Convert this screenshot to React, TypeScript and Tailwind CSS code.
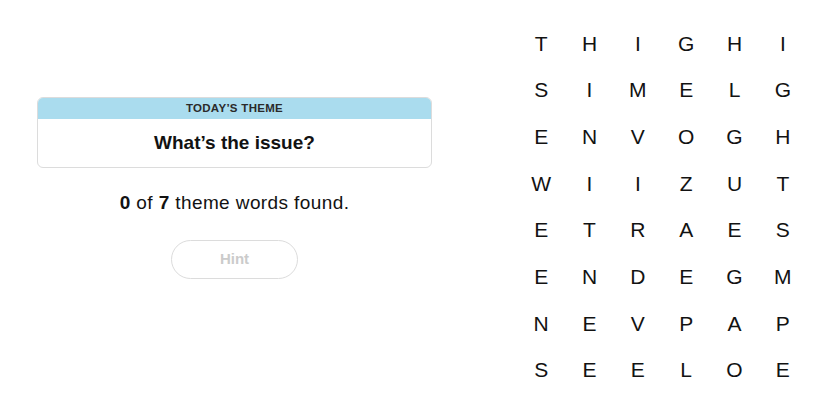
const grid = [
  "THIGHI",
  "SIMELG",
  "ENVOGH",
  "WIIZUT",
  "ETRAES",
  "ENDEGM",
  "NEVPAP",
  "SEELOE",
];

export default function App() {
  return (
    <div
      className="flex h-[413px] w-[825px] items-start bg-white text-[#121212]"
      style={{ fontFamily: '"Liberation Sans", Arial, sans-serif' }}
    >
      <div className="ml-[37px] flex w-[395px] flex-col items-center pt-[97px]">
        <div className="w-full overflow-hidden rounded-[6px] border border-[#dcdcdc]">
          <div className="flex h-[21px] items-center justify-center bg-[#aadcee] text-[11.5px] font-bold tracking-[0.3px] text-[#2a2a2a]">
            TODAY’S THEME
          </div>
          <div className="flex h-[48px] items-center justify-center text-[19px] font-bold">
            What’s the issue?
          </div>
        </div>
        <p className="mt-[23px] text-[19px] leading-[24px] tracking-[0.4px]">
          <span className="font-bold">0</span> of <span className="font-bold">7</span> theme words found.
        </p>
        <button className="mt-[25px] h-[39px] w-[127px] rounded-full border-[1.5px] border-[#dcdcdc] text-[15px] font-bold text-[#cbcbcb]">
          Hint
        </button>
      </div>
      <div className="ml-[85px] grid w-[290px] grid-cols-6 content-start pt-[20px]">
        {grid.flatMap((row, r) =>
          row.split("").map((ch, c) => (
            <div
              key={`${r}-${c}`}
              className="flex h-[46.7px] items-center justify-center text-[21px]"
            >
              {ch}
            </div>
          ))
        )}
      </div>
    </div>
  );
}
